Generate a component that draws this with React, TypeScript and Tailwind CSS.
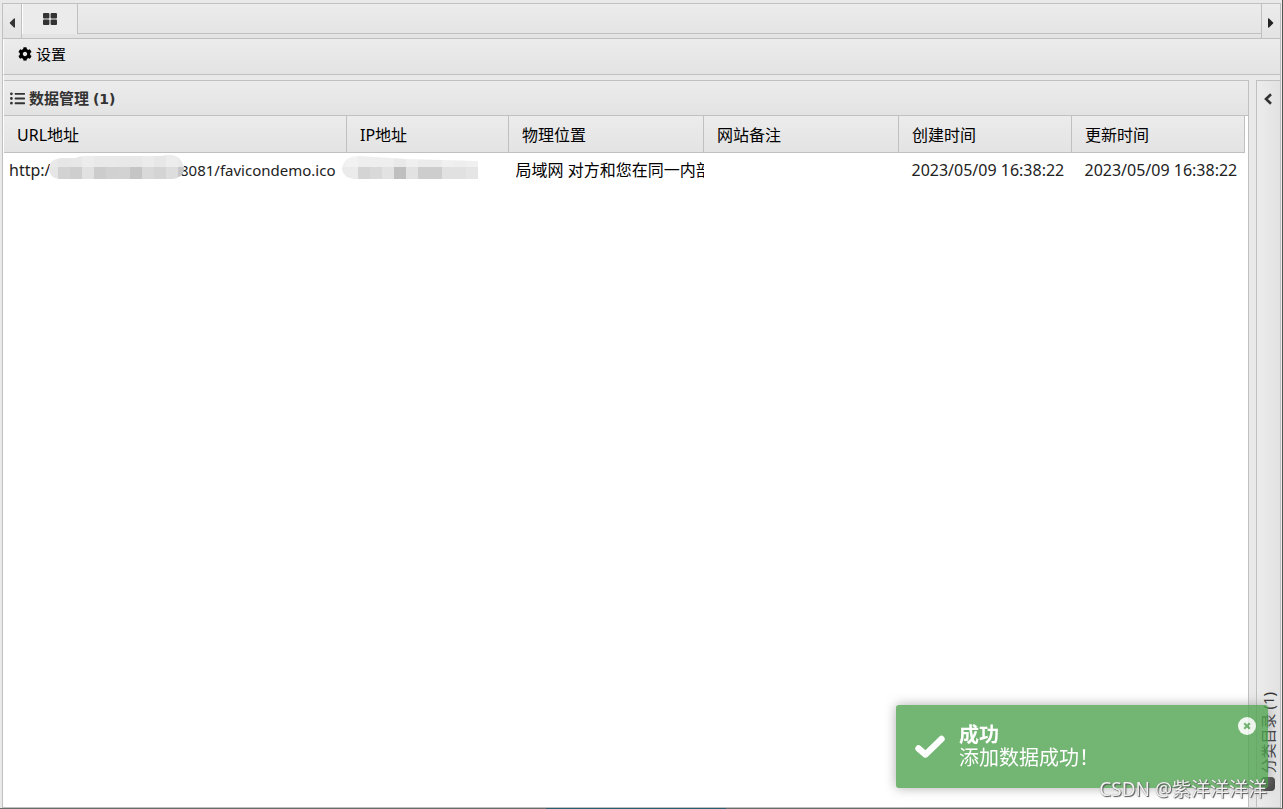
import React from 'react';
import { FaCog, FaListUl, FaCaretLeft, FaCaretRight } from 'react-icons/fa';

interface SiteRow {
  url: { prefix: string; suffix: string };
  location: string;
  remark: string;
  createdAt: string;
  updatedAt: string;
}

const columns = [
  { title: 'URL地址', width: '' },
  { title: 'IP地址', width: 'w-[162px]' },
  { title: '物理位置', width: 'w-[195px]' },
  { title: '网站备注', width: 'w-[195px]' },
  { title: '创建时间', width: 'w-[173px]' },
  { title: '更新时间', width: 'w-[173px]' },
];

const rows: SiteRow[] = [
  {
    url: { prefix: 'http:/', suffix: '8081/favicondemo.ico' },
    location: '局域网 对方和您在同一内部',
    remark: '',
    createdAt: '2023/05/09 16:38:22',
    updatedAt: '2023/05/09 16:38:22',
  },
];

const barClass = 'bg-linear-to-b from-[#ececec] to-[#e3e3e3]';

interface MosaicProps {
  id: string;
  outline: string;
  width: number;
  start: number;
  top: string[];
  bottom: string[];
  className?: string;
}

// 打码色块，每格 12px
const Mosaic: React.FC<MosaicProps> = ({ id, outline, width, start, top, bottom, className }) => (
  <svg width={width} height={24} className={`shrink-0 ${className ?? ''}`} aria-hidden="true">
    <clipPath id={id}>
      <path d={outline} />
    </clipPath>
    <g clipPath={`url(#${id})`} shapeRendering="crispEdges">
      {top.map((c, i) => (
        <rect key={i} x={start + i * 12} y={0} width={12} height={12} fill={c} />
      ))}
      {bottom.map((c, i) => (
        <rect key={i} x={start + i * 12} y={12} width={12} height={12} fill={c} />
      ))}
    </g>
  </svg>
);

const TabStrip = () => (
  <div className={`flex h-[35px] shrink-0 border-b border-[#c0c0c0] ${barClass}`}>
    <button className="flex w-[19px] items-center justify-center border-r border-[#c0c0c0] pt-1" title="向左">
      <FaCaretLeft className="size-4 text-[#333]" />
    </button>
    <button className="flex h-[30px] w-14 items-center justify-center border-r border-[#c0c0c0] border-l border-l-white bg-[#ebebeb]" title="首页">
      <svg width="14" height="12" viewBox="0 0 14 12" fill="#333">
        <rect x="0" y="0" width="6.4" height="5.4" rx="1" />
        <rect x="7.6" y="0" width="6.4" height="5.4" rx="1" />
        <rect x="0" y="6.6" width="6.4" height="5.4" rx="1" />
        <rect x="7.6" y="6.6" width="6.4" height="5.4" rx="1" />
      </svg>
    </button>
    <div className="h-[30px] flex-1 border-b border-[#c0c0c0]" />
    <button className="flex w-[19px] items-center justify-center border-l border-[#c0c0c0] pt-1" title="向右">
      <FaCaretRight className="size-4 text-[#222]" />
    </button>
  </div>
);

const DataTable = () => (
  <table className="w-full table-fixed border-collapse text-left text-base leading-6 text-[#222]">
    <thead>
      <tr className={`h-9 ${barClass}`}>
        {columns.map((col) => (
          <th
            key={col.title}
            className={`${col.width} border-r border-b border-[#c0c0c0] px-[13px] pt-[3px] font-normal text-black`}
          >
            {col.title}
          </th>
        ))}
      </tr>
    </thead>
    <tbody>
      {rows.map((row) => (
        <tr key={row.url.suffix} className="h-9 whitespace-nowrap">
          <td className="pl-[5px]">
            <div className="flex items-center text-[15px]">
              <span className="w-10 text-base">{row.url.prefix}</span>
              <Mosaic
                id="mask-url"
                className="relative -mr-1 mb-1.5"
                width={135}
                start={-3}
                outline="M10 24 Q0 23 0 13 Q1 3 14 3 L26 3 Q34 0 44 1 L112 1 Q125 -2 130 3 Q136 9 135 15 Q133 23 124 24 Z"
                top={['#e9e9e9', '#e6e6e6', '#e7e7e7', '#ececec', '#e9e9e9', '#e9e9e9', '#e8e8e8', '#e8e8e8', '#ebebeb', '#e7e7e7', '#ededed', '#e9e9e9']}
                bottom={['#e6e6e6', '#d2d2d2', '#cecece', '#e1e1e1', '#cccccc', '#d1d1d1', '#d2d2d2', '#c5c5c5', '#d9d9d9', '#d4d4d4', '#dddddd', '#c8c8c8']}
              />
              <span>{row.url.suffix}</span>
            </div>
          </td>
          <td>
            <Mosaic
              id="mask-ip"
              className="relative -ml-1.5 mb-1.5"
              width={137}
              start={-7}
              outline="M6 22 Q-2 15 3 8 Q6 1 18 1 L66 4 L137 6 L137 24 L12 24 Z"
              top={['#f0f0f0', '#f2f2f2', '#eeeeee', '#eeeeee', '#eeeeee', '#e9e9e9', '#efefef', '#ebebeb', '#ebebeb', '#f0f0f0', '#eeeeee', '#f0f0f0']}
              bottom={['#ebebeb', '#ebebeb', '#d4d4d4', '#d9d9d9', '#e2e2e2', '#bfbfbf', '#e2e2e2', '#cdcdcd', '#cdcdcd', '#e1e1e1', '#e1e1e1', '#e5e5e5']}
            />
          </td>
          <td className="pl-[7px]">
            <div className="overflow-hidden text-black">{row.location}</div>
          </td>
          <td>{row.remark}</td>
          <td className="pl-[13px]">{row.createdAt}</td>
          <td className="pl-[13px]">{row.updatedAt}</td>
        </tr>
      ))}
    </tbody>
  </table>
);

const DataPanel = () => (
  <section className="flex min-w-0 flex-1 flex-col border-t border-r border-[#c0c0c0] bg-white">
    <h2 className={`flex h-[35px] shrink-0 items-center gap-1 border-b border-[#c0c0c0] pl-1.5 text-[15px] font-bold text-[#333] ${barClass}`}>
      <FaListUl className="size-[15px]" />
      <span>
        数据管理 <span className="font-['DejaVu_Sans',sans-serif] text-sm">(1)</span>
      </span>
    </h2>
    <div className="pr-[3px]">
      <DataTable />
    </div>
  </section>
);

const CategoryPanel = () => (
  <aside className="flex w-6 shrink-0 flex-col items-center justify-between border-t border-l border-[#c0c0c0] bg-linear-to-r from-[#ececec] to-[#e2e2e2] pt-3 pr-px pb-4">
    <button title="展开">
      <svg width="10" height="12" viewBox="0 0 10 12" fill="none" stroke="#333" strokeWidth="2.6">
        <path d="M8 1.2 L3 6 L8 10.8" />
      </svg>
    </button>
    <div className="flex flex-col items-center gap-1">
      <span className="rotate-180 text-[15px] leading-5 whitespace-nowrap text-[#333] [text-orientation:sideways] [writing-mode:vertical-rl]">
        分类目录 (1)
      </span>
      <span className="size-3.5 rounded-sm bg-[#444]" />
    </div>
  </aside>
);

const Toast = () => (
  <div
    role="alert"
    className="fixed right-[15px] bottom-[21px] flex h-[83px] w-[372px] items-center rounded-[3px] bg-[#51a351] pl-[18px] text-white opacity-80 shadow-[0_0_12px_#999]"
  >
    <svg width="32" height="26" viewBox="0 0 32 26" fill="none" stroke="#fff" strokeWidth="6.4" strokeLinecap="round" strokeLinejoin="round">
      <path d="M4.5 14.5 L11.5 20.5 L27.5 5" />
    </svg>
    <div className="pb-0.5 pl-[13px] text-xl leading-[23px]">
      <div className="font-bold">成功</div>
      <div>添加数据成功！</div>
    </div>
    <button className="absolute top-3 right-3" title="关闭">
      <svg width="18" height="18" viewBox="0 0 18 18">
        <circle cx="9" cy="9" r="9" fill="#fff" fillOpacity="0.9" />
        <path d="M6.2 6.2 L11.8 11.8 M11.8 6.2 L6.2 11.8" stroke="#51a351" strokeWidth="2.2" />
      </svg>
    </button>
  </div>
);

export default function App() {
  return (
    <div className="flex h-screen flex-col bg-[#e9e9e9] font-['Noto_Sans','Noto_Sans_CJK_SC',sans-serif]">
      <div className="flex min-h-0 flex-1 border-r border-[#555] pt-[3px] pr-px pl-0.5">
        <main className="flex min-w-0 flex-1 flex-col border border-[#c0c0c0]">
          <TabStrip />
          <div className={`flex h-9 shrink-0 items-start border-b border-l border-b-[#c0c0c0] border-l-white pt-[3px] pl-3.5 ${barClass}`}>
            <button className="flex items-center gap-1 text-[15px] leading-6 text-black">
              <FaCog className="size-3.5" />
              设置
            </button>
          </div>
          <div className="flex min-h-0 flex-1 gap-[7px] border-l border-white pt-[5px]">
            <DataPanel />
            <CategoryPanel />
          </div>
        </main>
      </div>
      <div className="flex h-px shrink-0 justify-center bg-[#6b6b6b] pr-3">
        <div className="w-[180px] bg-[#2a5f70]" />
      </div>
      <Toast />
      <div className="fixed right-4 bottom-1.5 text-[19px] leading-7 whitespace-nowrap text-white/90 [text-shadow:1px_1px_1px_#555,0_0_1px_#777]">
        CSDN @紫洋洋洋洋
      </div>
    </div>
  );
}
